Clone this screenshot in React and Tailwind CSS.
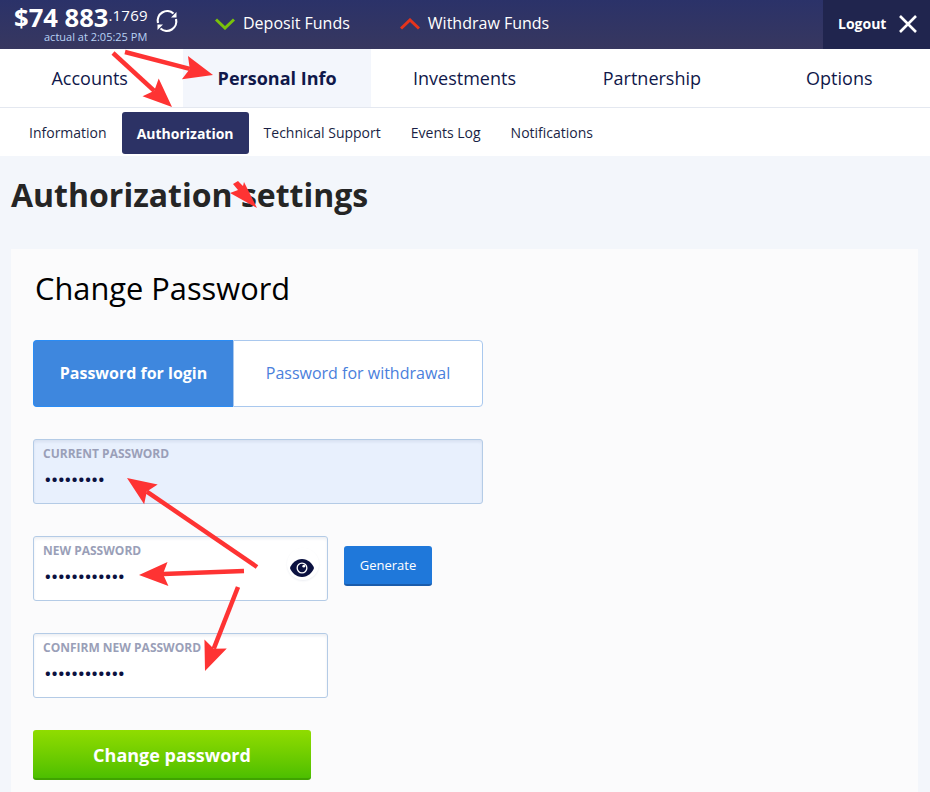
import React from "react";

const Dots = ({ n }) => (
  <div className="text-[#0b1140] text-[15px] leading-[20px] tracking-[1.05px] font-bold pl-[11px]">{"•".repeat(n)}</div>
);

function Field({ label, n, w, bg, children }) {
  return (
    <div className={`relative ${w} ${bg} h-[65px] border border-[#b4cbe6] rounded-[3px] pt-[6px] shadow-[inset_0_2px_3px_rgba(30,50,100,0.08)]`}>
      <div className="pl-[9px] text-[12px] leading-[16px] font-bold text-[#9a9fb8] mb-[7px]">{label}</div>
      <Dots n={n} />
      {children}
    </div>
  );
}

function Arrow({ x1, y1, x2, y2 }) {
  const a = Math.atan2(y2 - y1, x2 - x1);
  const L = 29, W = 12, notch = 24;
  const bx = x2 - notch * Math.cos(a), by = y2 - notch * Math.sin(a);
  const hx = x2 - L * Math.cos(a), hy = y2 - L * Math.sin(a);
  const px = -Math.sin(a), py = Math.cos(a);
  const pts = `${x2},${y2} ${hx + px * W},${hy + py * W} ${bx},${by} ${hx - px * W},${hy - py * W}`;
  return (
    <g>
      <line x1={x1} y1={y1} x2={bx} y2={by} stroke="#fe3333" strokeWidth="4.500" />
      <polygon points={pts} fill="#fe3333" />
    </g>
  );
}

export default function App() {
  return (
    <div className="relative w-[930px] h-[792px] overflow-hidden bg-[#f3f6fb] font-['Open_Sans',sans-serif]">
      <header className="h-[49px] flex bg-gradient-to-b from-[#2b3269] to-[#37375f] text-white">
        <div className="w-[148px] ml-[14px] shrink-0 pt-[3px]">
          <div className="flex items-start h-[27px]">
            <span className="text-[25.6px] leading-[30px] font-bold tracking-[0px]">$74 883</span>
            <span className="text-[15px] leading-[22px] pt-[1px] tracking-[0.2px]">.1769</span>
          </div>
          <div className="text-[11px] leading-[14px] text-[#b9d3f5] ml-[30px] whitespace-nowrap">actual at 2:05:25 PM</div>
        </div>
        <svg className="mt-[9px] ml-[-7px]" width="24" height="24" viewBox="0 0 24 24" fill="none" stroke="#fff" strokeWidth="2.200">
          <path d="M3 14A9.500 9.500 0 0 1 18.500 4.500" />
          <path d="M21 10A9.500 9.500 0 0 1 5.500 19.500" />
          <path d="M21.500 3v5.500h-5.500" fill="#fff" stroke="none" />
          <path d="M2.500 21v-5.500h5.500" fill="#fff" stroke="none" />
        </svg>
        <div className="flex items-center ml-[36px] h-[47px]">
          <svg width="20" height="12" viewBox="0 0 20 12" fill="none" stroke="#79c20a" strokeWidth="3" className="mt-[1px]"><path d="M1 1.500l9 8.500 9-8.500" /></svg>
          <span className="ml-[8px] text-[16px] mt-[-2px]">Deposit Funds</span>
        </div>
        <div className="flex items-center ml-[50px] h-[47px]">
          <svg width="20" height="12" viewBox="0 0 20 12" fill="none" stroke="#e5341c" strokeWidth="3" className="mt-[1px]"><path d="M1 10.500l9-8.500 9 8.500" /></svg>
          <span className="ml-[8px] text-[16px] mt-[-2px]">Withdraw Funds</span>
        </div>
        <div className="ml-auto w-[107px] bg-[#20254e] flex items-center pl-[15px] pb-[2px]">
          <span className="text-[14px] font-bold">Logout</span>
          <svg className="ml-[12px]" width="20" height="20" viewBox="0 0 20 20" stroke="#fff" strokeWidth="2.600"><path d="M2 2l16 16M18 2L2 18" /></svg>
        </div>
      </header>

      <nav className="h-[59px] ml-[-4px] w-[937px] grid grid-cols-5 bg-white border-b border-[#e4e8f0] text-[18px] text-[#10184a]">
        <div className="flex items-center justify-center">Accounts</div>
        <div className="flex items-center justify-center bg-[#f3f6fc] font-bold">Personal Info</div>
        <div className="flex items-center justify-center">Investments</div>
        <div className="flex items-center justify-center">Partnership</div>
        <div className="flex items-center justify-center">Options</div>
      </nav>

      <div className="h-[48px] bg-white flex items-start pt-[4px] pl-[14px] text-[14px] text-[#1a1f45]">
        <div className="h-[42px] flex items-center px-[15px] pb-[1px]">Information</div>
        <div className="h-[42px] flex items-center px-[15px] bg-[#2c3265] text-white font-bold rounded-[3px]">Authorization</div>
        <div className="h-[42px] flex items-center px-[15px] pb-[1px]">Technical Support</div>
        <div className="h-[42px] flex items-center px-[15px] pb-[1px]">Events Log</div>
        <div className="h-[42px] flex items-center px-[15px] pb-[1px]">Notifications</div>
      </div>

      <h1 className="ml-[11px] mt-[17px] text-[32px] leading-[44px] font-bold text-[#252525]">Authorization settings</h1>

      <main className="ml-[11px] mt-[32px] w-[907px] h-[560px] bg-[#fbfbfc] pl-[22px]">
        <h2 className="pl-[2px] pt-[17px] text-[30.800px] leading-[44px] font-medium text-black">Change Password</h2>

        <div className="mt-[30px] w-[450px] h-[67px] flex text-[16px]">
          <div className="w-[200px] flex items-center justify-center bg-[#3e87de] border border-[#2a8cf5] border-r-0 text-white font-bold rounded-l-[4px] pb-[1px]">Password for login</div>
          <div className="w-[250px] flex items-center justify-center bg-white border border-[#a9c8ee] text-[#4a80dc] rounded-r-[4px] pb-[1px]">Password for withdrawal</div>
        </div>

        <div className="mt-[32px]">
          <Field label="CURRENT PASSWORD" n={9} w="w-[450px]" bg="bg-[#e8f0fd]" />
        </div>

        <div className="mt-[32px] flex items-start">
          <Field label="NEW PASSWORD" n={12} w="w-[295px]" bg="bg-white">
            <div className="absolute right-[8px] top-[11px] w-[32px] h-[32px] rounded-full bg-white shadow-[0_1px_2px_rgba(30,50,100,0.08)]" />
            <svg className="absolute right-[12px] top-[21px]" width="26" height="20" viewBox="0 0 26 20">
              <path fill="#0b1140" d="M13 1C7 1 2.500 5.500 1 10c1.500 4.500 6 9 12 9s10.500-4.500 12-9c-1.500-4.500-6-9-12-9z" />
              <circle cx="13" cy="10" r="5.500" fill="#fff" />
              <circle cx="13" cy="10" r="4.200" fill="#0b1140" />
              <circle cx="14.800" cy="8.200" r="1.400" fill="#fff" />
            </svg>
          </Field>
          <button className="ml-[16px] mt-[10px] w-[88px] h-[40px] bg-[#1f78da] border-b-[2px] border-[#1a5cab] rounded-[3px] text-white text-[13px] pt-[2px]">Generate</button>
        </div>

        <div className="mt-[32px]">
          <Field label="CONFIRM NEW PASSWORD" n={12} w="w-[295px]" bg="bg-white" />
        </div>

        <button className="mt-[32px] w-[278px] h-[50px] rounded-[3px] bg-gradient-to-b from-[#90dc00] to-[#4cbf00] border-b-[2px] border-[#3fa300] text-white text-[18px] font-bold pt-[2px]">Change password</button>
      </main>

      <svg className="absolute left-0 top-0 pointer-events-none" width="930" height="792">
        <Arrow x1={125} y1={52} x2={213} y2={75} />
        <Arrow x1={113} y1={53} x2={172} y2={107} />
        <polygon points="257,208 230,193 238,190 233,184 238,181 243,186 244,182" fill="#fe3333" />
        <Arrow x1={257} y1={567} x2={127} y2={478} />
        <Arrow x1={244} y1={571} x2={139} y2={575} />
        <Arrow x1={238} y1={587} x2={205} y2={671} />
      </svg>
    </div>
  );
}
